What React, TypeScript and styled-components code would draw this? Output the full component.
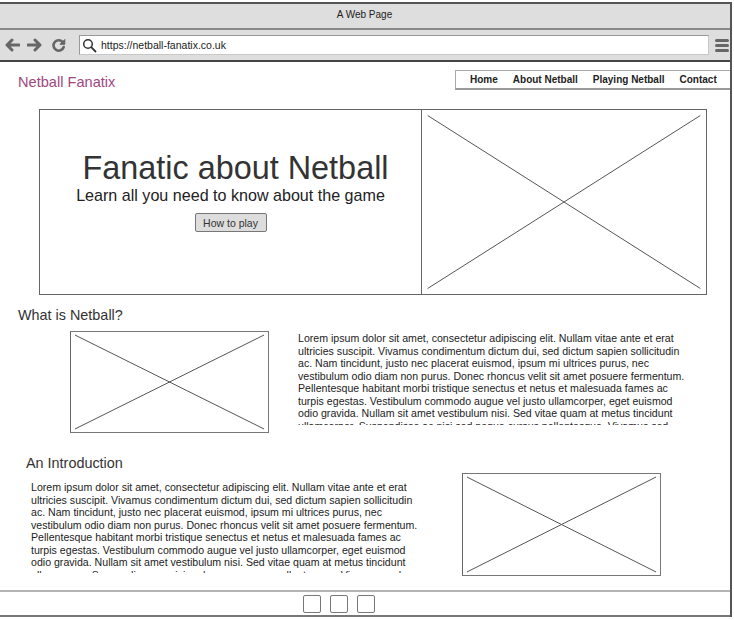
import React from "react";
import styled, { createGlobalStyle } from "styled-components";

const Global = createGlobalStyle`
  html, body { margin: 0; padding: 0; background: #fff; }
  body { font-family: "Liberation Sans", Arial, sans-serif; color: #333; }
`;

const Window = styled.div`
  margin-top: 2px;
  width: 730px;
  height: 613px;
  border-top: 2px solid #555;
  border-right: 2px solid #555;
  display: flex;
  flex-direction: column;
  overflow: hidden;
`;

const TitleBar = styled.div`
  box-sizing: border-box;
  flex: none;
  height: 26px;
  background: #dedede;
  border-bottom: 2px solid #888;
  display: flex;
  align-items: center;
  justify-content: center;
  font-size: 10px;
  color: #222;
  padding: 0 1px 4px 0;
`;

const Toolbar = styled.div`
  flex: none;
  height: 30px;
  background: #dedede;
  border-bottom: 2px solid #444;
  display: flex;
  align-items: center;
  padding-left: 5px;
`;

const NavIcon = styled.svg<{ $gap: number }>`
  display: block;
  flex: none;
  margin-right: ${(p) => p.$gap}px;
`;

const Address = styled.div`
  width: 626px;
  height: 18px;
  background: #fff;
  border: 1px solid #999;
  border-right-color: #c8c8c8;
  border-bottom-color: #c8c8c8;
  display: flex;
  align-items: center;
  padding-left: 2px;
  font-size: 10.5px;
  color: #222;
  gap: 4px;
`;

const Hamburger = styled.div`
  margin-left: 6px;
  width: 14px;
  display: flex;
  flex-direction: column;
  gap: 2px;
  span {
    display: block;
    height: 3px;
    border-radius: 1.5px;
    background: #666;
  }
`;

const Content = styled.div`
  flex: 1;
  min-height: 0;
  overflow: hidden;
  background: #fff;
  display: flex;
  flex-direction: column;
`;

const Header = styled.div`
  margin-top: 8px;
  height: 20px;
  display: flex;
  align-items: center;
  justify-content: space-between;
`;

const Logo = styled.div`
  margin-left: 18px;
  margin-top: 4px;
  font-size: 14.6px;
  color: #a1477d;
`;

const Nav = styled.nav`
  box-sizing: border-box;
  height: 20px;
  width: 275px;
  border: 1px solid #aaa;
  border-bottom: 2px solid #999;
  border-right: none;
  display: flex;
  align-items: center;
  gap: 15px;
  padding-left: 14px;
  font-size: 10px;
  font-weight: bold;
  color: #222;
`;

const Hero = styled.section`
  flex: none;
  margin: 19px 0 0 39px;
  width: 666px;
  height: 184px;
  border: 1px solid #666;
  display: flex;
`;

const HeroText = styled.div`
  width: 381px;
  display: flex;
  flex-direction: column;
  align-items: center;
  padding-top: 41px;
  box-sizing: border-box;
`;

const HeroTitle = styled.h1`
  margin: 0;
  font-size: 32.4px;
  font-weight: normal;
  line-height: 34px;
  color: #333;
  padding-left: 10px;
`;

const HeroSub = styled.div`
  font-size: 16.1px;
  line-height: 18px;
  color: #222;
  margin-top: 1px;
`;

const Button = styled.button`
  margin-top: 9px;
  width: 72px;
  height: 19px;
  padding: 0;
  background: #ddd;
  border: 1px solid #777;
  border-radius: 2px;
  font-family: "Liberation Sans", Arial, sans-serif;
  font-size: 10.5px;
  color: #333;
`;

const PlaceholderBox = styled.div<{ $w: number; $h: number; $borderLeftOnly?: boolean }>`
  box-sizing: border-box;
  width: ${(p) => p.$w}px;
  height: ${(p) => p.$h}px;
  flex: none;
  border: ${(p) => (p.$borderLeftOnly ? "none" : "1px solid #777")};
  border-left: 1px solid #666;
  svg { display: block; width: 100%; height: 100%; }
`;

const SectionTitle = styled.h2<{ $left: number; $top: number }>`
  margin: ${(p) => p.$top}px 0 0 ${(p) => p.$left}px;
  font-size: 14.4px;
  line-height: 18px;
  font-weight: normal;
  color: #333;
`;

const Row = styled.div<{ $top: number; $left: number; $gap: number }>`
  flex: none;
  margin: ${(p) => p.$top}px 0 0 ${(p) => p.$left}px;
  display: flex;
  align-items: flex-start;
  gap: ${(p) => p.$gap}px;
`;

const Para = styled.div<{ $height: number; $top: number; $width: number }>`
  flex: none;
  width: ${(p) => p.$width}px;
  height: ${(p) => p.$height}px;
  margin-top: ${(p) => p.$top}px;
  overflow: hidden;
  font-size: 10.6px;
  line-height: 12.5px;
  color: #222;
  span { display: block; white-space: nowrap; }
`;

const StatusBar = styled.div`
  flex: none;
  height: 23px;
  border-top: 2px solid #b4b4b4;
  border-bottom: 2px solid #777;
  display: flex;
  align-items: center;
  gap: 9px;
  padding-left: 303px;
  background: #fff;
`;

const StatusSquare = styled.div`
  width: 16px;
  height: 16px;
  border: 1px solid #777;
  border-radius: 2px;
`;

const LINES = [
  "Lorem ipsum dolor sit amet, consectetur adipiscing elit. Nullam vitae ante et erat",
  "ultricies suscipit. Vivamus condimentum dictum dui, sed dictum sapien sollicitudin",
  "ac. Nam tincidunt, justo nec placerat euismod, ipsum mi ultrices purus, nec",
  "vestibulum odio diam non purus. Donec rhoncus velit sit amet posuere fermentum.",
  "Pellentesque habitant morbi tristique senectus et netus et malesuada fames ac",
  "turpis egestas. Vestibulum commodo augue vel justo ullamcorper, eget euismod",
  "odio gravida. Nullam sit amet vestibulum nisi. Sed vitae quam at metus tincidunt",
  "ullamcorper. Suspendisse ac nisi sed neque cursus pellentesque. Vivamus sed",
];

const Cross = () => (
  <svg viewBox="0 0 100 100" preserveAspectRatio="none">
    <line x1="2" y1="3" x2="98" y2="97" stroke="#555" strokeWidth="1" vectorEffect="non-scaling-stroke" />
    <line x1="98" y1="3" x2="2" y2="97" stroke="#555" strokeWidth="1" vectorEffect="non-scaling-stroke" />
  </svg>
);

const Image = (props: { w: number; h: number; leftOnly?: boolean }) => (
  <PlaceholderBox $w={props.w} $h={props.h} $borderLeftOnly={props.leftOnly}>
    <Cross />
  </PlaceholderBox>
);

const Lorem = (props: { height: number; top: number; width: number }) => (
  <Para $height={props.height} $top={props.top} $width={props.width}>
    {LINES.map((l) => (
      <span key={l}>{l}</span>
    ))}
  </Para>
);

export default function App() {
  return (
    <>
      <Global />
      <Window>
        <TitleBar>A Web Page</TitleBar>
        <Toolbar>
          <NavIcon $gap={7} width="15" height="14" viewBox="0 0 15 14">
            <path d="M7 2 L2 7 L7 12 M2.5 7 H14" fill="none" stroke="#666" strokeWidth="3" strokeLinecap="round" strokeLinejoin="round" />
          </NavIcon>
          <NavIcon $gap={9} width="15" height="14" viewBox="0 0 15 14">
            <path d="M8 2 L13 7 L8 12 M12.5 7 H1" fill="none" stroke="#666" strokeWidth="3" strokeLinecap="round" strokeLinejoin="round" />
          </NavIcon>
          <NavIcon $gap={13} width="15" height="15" viewBox="0 0 15 15">
            <path d="M12 4.5 A5.2 5.2 0 1 0 12.7 9" fill="none" stroke="#666" strokeWidth="2.6" strokeLinecap="round" />
            <path d="M13.8 1.5 L13.8 6.3 L9 6.3 Z" fill="#666" stroke="#666" strokeWidth="1" strokeLinejoin="round" />
          </NavIcon>
          <Address>
            <svg width="15" height="15" viewBox="0 0 15 15">
              <circle cx="6" cy="6" r="4.3" fill="none" stroke="#333" strokeWidth="1.5" />
              <path d="M9.2 9.2 L13.5 13.5" stroke="#333" strokeWidth="1.8" strokeLinecap="round" />
            </svg>
            https://netball-fanatix.co.uk
          </Address>
          <Hamburger>
            <span />
            <span />
            <span />
          </Hamburger>
        </Toolbar>
        <Content>
          <Header>
            <Logo>Netball Fanatix</Logo>
            <Nav>
              <span>Home</span>
              <span>About Netball</span>
              <span>Playing Netball</span>
              <span>Contact</span>
            </Nav>
          </Header>
          <Hero>
            <HeroText>
              <HeroTitle>Fanatic about Netball</HeroTitle>
              <HeroSub>Learn all you need to know about the game</HeroSub>
              <Button>How to play</Button>
            </HeroText>
            <Image w={285} h={184} leftOnly />
          </Hero>
          <SectionTitle $left={18} $top={11}>What is Netball?</SectionTitle>
          <Row $top={7} $left={70} $gap={29}>
            <Image w={199} h={102} />
            <Lorem height={93} top={1} width={400} />
          </Row>
          <SectionTitle $left={26} $top={21}>An Introduction</SectionTitle>
          <Row $top={1} $left={31} $gap={31}>
            <Lorem height={92} top={8} width={400} />
            <Image w={199} h={103} />
          </Row>
        </Content>
        <StatusBar>
          <StatusSquare />
          <StatusSquare />
          <StatusSquare />
        </StatusBar>
      </Window>
    </>
  );
}
